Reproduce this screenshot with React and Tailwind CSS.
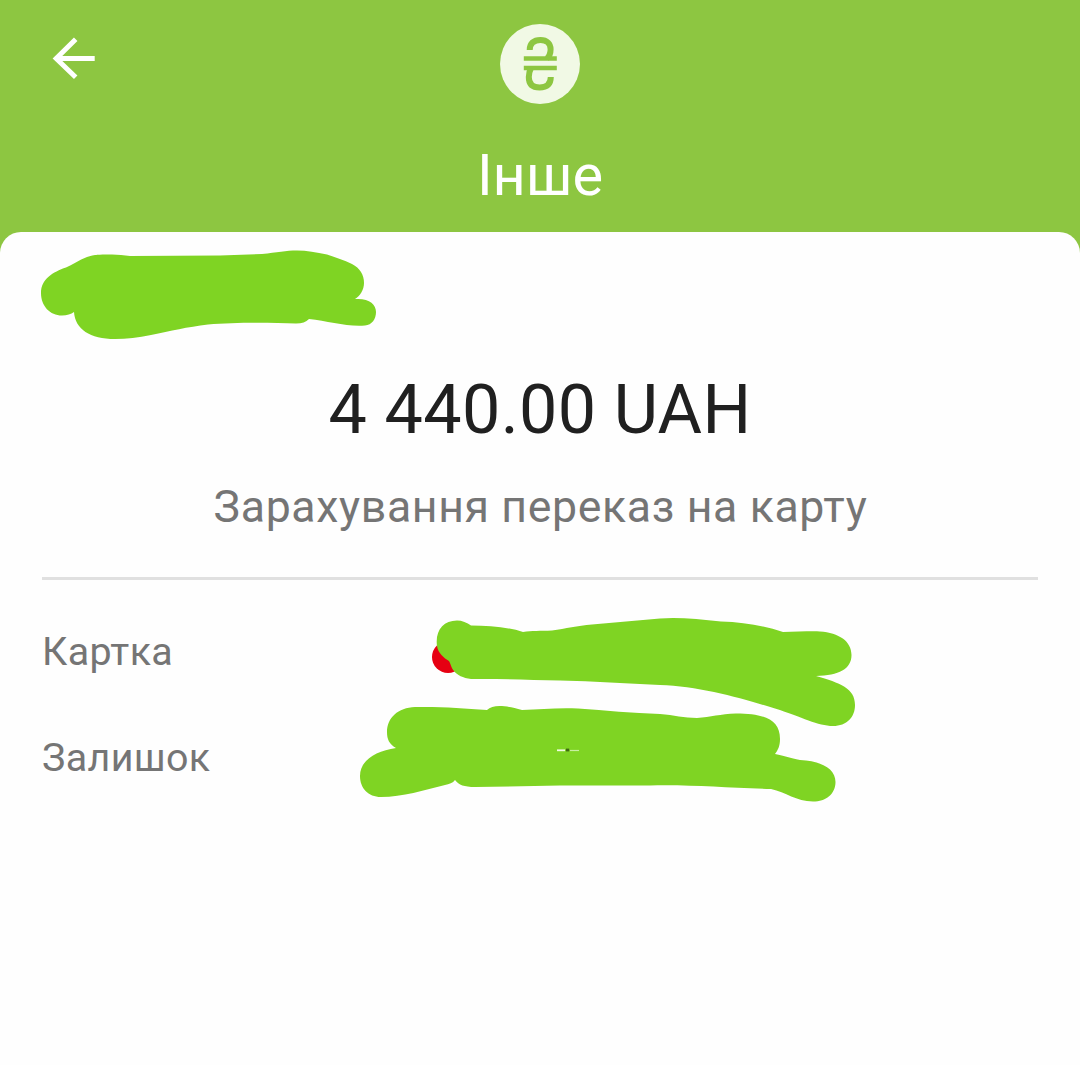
import React from 'react';

const BackArrow = () => (
    <svg width="44" height="44" viewBox="52 36 44 44" fill="none" stroke="#fff" strokeWidth="5">
        <path d="M94.700 58.5H56M75.700 39.3L56.2 58.5L75.700 77.2" />
    </svg>
);

const HryvniaIcon = () => (
    <svg width="80" height="80" viewBox="500 24 80 80" fill="none" stroke="#8dc641">
        <circle cx="540" cy="64" r="40" fill="#f1f9e5" stroke="none" />
        <path
            d="M529.7 50C529.7 43.5 533.5 40 540.5 40C547 40 550.6 43.8 550.6 49.3C550.6 53.8 549 56.8 546.8 58.5"
            strokeWidth="6"
        />
        <path d="M523.8 58.6H556.8M523.8 68H556.8" strokeWidth="4.5" />
        <path
            d="M531 68C529.4 71 528.8 73.5 528.8 77C528.8 84 532.6 87.5 539.6 87.5C546.8 87.5 550.7 84.2 550.8 77"
            strokeWidth="6"
        />
    </svg>
);

const DateScribble = () => (
    <svg className="block" width="340" height="96" viewBox="40 246 340 96" fill="#7fd423">
        <path d="M74 312C71 314 67 315.500 62 315.500C50 315.500 41 306 41 293C41 279 53 272 66 267.500C72 265 79 260 87 257C94 254.500 101 254.500 112 254.500C118 254.500 124 255.500 130 256L220 255.500L262 254C277 252.500 286 250.500 297 250.500C307 250.500 316 252.500 327 254.500C336 257.500 344 260 352 264C360 268 364 275 364 283C364 290 360 296 355 299C369 298 376 304 376 312C376 319 372 325 365 325.500C347 327 328 321 309 319C306 322 302 323.500 296 323.500C272 322.500 235 322 208 324.500C187 327 171 331 151 335C138 337.500 127 339 115 339C90 339 75 329 74 312Z" />
    </svg>
);

const CardScribble = () => (
    <svg className="block" width="426" height="112" viewBox="430 616 426 112" fill="#7fd423">
        <circle cx="448" cy="657" r="16" fill="#e60012" />
        <path d="M437 646C435 631 443 620.500 457 620.500C462 620.500 467 622.500 471 625.500C489 625.500 508 627 523 632C532 630.500 540 631 552 630.500C566 628.500 577 626 592 624.500L660 618.500C677 617 699 619 721 621.500C744 622 764 626 783 632C796 632 810 631 820 631.500C839 633 851.500 641 851.500 655C851.500 669 839 675.500 816 676C840 683 855 688 855 705C855 717 847 726 833 726C818 726 802 717 775 708.500C744 699 700 686 660 685C626 683.500 594 681 560 680.500C529 680 498 678.500 471 679C463 678 457 675 454 671C451 668 451 664 449 661C444 658 438 653 437 646Z" />
    </svg>
);

const BalanceScribble = () => (
    <svg className="block" width="478" height="98" viewBox="359 705 478 98" fill="#7fd423">
        <path d="M396 748C389 744 387 739 387 732C387 718 398 707.500 415 707C443 706.500 463 708.500 487 710C493 704.500 504 705 522 710C541 709.500 557 707.500 578 708.500C606 710.500 632 713 660 714C674 715 684 718 697 718C711 717 720 714 736 713.500C765 713.500 780 720 780 739C780 746 778 750 775 754C785 756 790 758 800 760C822 761 835.500 769 835.500 782C835.500 794 826 801.500 813 801.500C796 801.500 786 792 771 789C726 788 692 784.500 650 785.500L560 785.500L475 787C464 787 459 785 455 780C453 783 449 784 445 785C424 790 403 797 381 797C368 797 360 788 360 776C360 760 376 751 396 748Z" />
        <path d="M557 750.300H565" stroke="#effbe0" strokeWidth="1.800" />
        <path d="M570 750.500H579" stroke="#c8efa0" strokeWidth="1.200" />
        <path d="M566 750H569.200" stroke="#3f6a12" strokeWidth="2.800" />
    </svg>
);

const Header = () => (
    <header className="grid h-[232px] grid-cols-[1fr_auto_1fr] items-start px-[52px] pt-6">
        <button className="mt-3 h-11 w-11">
            <BackArrow />
        </button>
        <div className="flex flex-col items-center">
            <HryvniaIcon />
            <h1 className="mt-9 text-[57.75px] leading-[70px] tracking-[-0.1px] text-white">Інше</h1>
        </div>
    </header>
);

const DetailRow = ({ label, labelClass, children }) => (
    <div className="flex items-start">
        <div className={`${labelClass} shrink-0 text-[39.4px] leading-[46px] tracking-[0.35px] text-[#757575]`}>
            {label}
        </div>
        {children}
    </div>
);

export default function App() {
    return (
        <div className="h-[1065px] w-[1080px] overflow-hidden bg-[#8dc641] font-['Roboto',sans-serif]">
            <Header />
            <main className="h-full rounded-t-[21px] bg-[#fefefe] px-[42px] pt-3.5">
                <div className="-ml-0.5">
                    <DateScribble />
                </div>
                <div className="mt-[28px] text-center text-[68.25px] leading-[80px] tracking-[0.35px] text-[#202020]">
                    4 440.00 UAH
                </div>
                <div className="mt-[30px] pl-px text-center text-[44.6px] leading-[54px] tracking-[0.65px] text-[#757575]">
                    Зарахування переказ на карту
                </div>
                <div className="mt-[43px] h-[3px] bg-[#e0e0e0]" />
                <div className="mt-[36px]">
                    <DetailRow label="Картка" labelClass="w-[388px] pt-[13px]">
                        <CardScribble />
                    </DetailRow>
                    <div className="-mt-[23px]">
                        <DetailRow label="Залишок" labelClass="w-[317px] pt-[30px]">
                            <BalanceScribble />
                        </DetailRow>
                    </div>
                </div>
            </main>
        </div>
    );
}
